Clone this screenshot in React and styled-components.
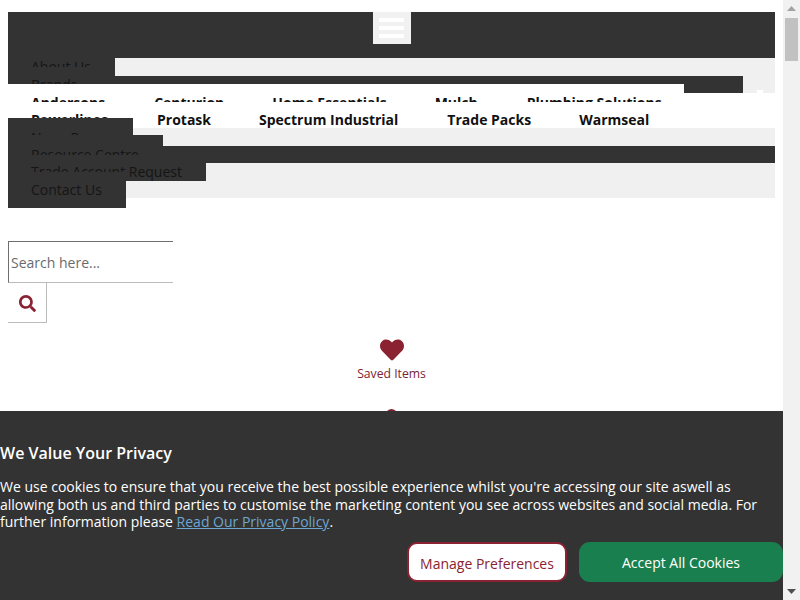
import React from "react";
import styled, { createGlobalStyle } from "styled-components";
import { FaSearch, FaHeart } from "react-icons/fa";

const Global = createGlobalStyle`
  html, body { overflow: hidden; }
  body {
    margin: 8px;
    margin-right: 25px;
    background: #fff;
    font-family: "Open Sans", "Liberation Sans", sans-serif;
    font-size: 14px;
    color: #151515;
  }
`;

const tones = { dark: "#333333", light: "#f0f0f0", white: "#ffffff" };

const Page = styled.div`
  padding-top: 4px;
`;

const Band = styled.div`
  display: flex;
  height: ${(p) => p.$h}px;
  overflow: hidden;
`;

const Cell = styled.div`
  flex: ${(p) => (p.$w ? `0 0 ${p.$w}px` : "1 1 0")};
  background: ${(p) => tones[p.$tone]};
  min-width: 0;
`;

const NubCell = styled(Cell)`
  display: flex;
  align-items: flex-end;
  padding-left: 14px;
`;

const Nub = styled.span`
  width: 6px;
  height: 3px;
  background: #fff;
`;

const TopBar = styled.div`
  display: flex;
  justify-content: center;
  height: 46px;
  background: #333333;
`;

const Burger = styled.button`
  display: flex;
  flex-direction: column;
  align-items: center;
  gap: 4px;
  width: 38px;
  height: 32px;
  padding: 6px 0 0;
  border: 0;
  background: #f1f1f1;
`;

const BurgerBar = styled.span`
  display: block;
  width: 25px;
  height: 4px;
  background: #fff;
`;

const MenuLabel = styled.div`
  box-sizing: border-box;
  height: ${(p) => p.$clip}px;
  overflow: hidden;
  padding: ${(p) => p.$offset || 0}px 0 0 23px;
  line-height: 18px;
  white-space: nowrap;
  color: #151515;
`;

const BrandTop = styled.div`
  display: flex;
  height: 18px;
  background: #fff;
`;

const BrandClip = styled.div`
  display: flex;
  height: 8px;
  margin-top: 1px;
  padding-left: 23px;
  overflow: hidden;
`;

const BrandRow = styled.div`
  display: flex;
  height: 17px;
  background: #fff;
`;

const BrandLink = styled.a`
  display: block;
  font-weight: 700;
  line-height: 18px;
  color: #111;
  white-space: nowrap;
  margin-right: ${(p) => p.$gap || 0}px;
`;

const BrandLead = styled.div`
  flex: 0 0 125px;
  display: flex;
  flex-direction: column;
`;

const BrandLeadText = styled.div`
  flex: 0 0 7px;
  overflow: hidden;
  padding-left: 23px;
  background: #fff;
`;

const BrandLeadCover = styled.div`
  flex: 1;
  background: #333333;
`;

const BrandRest = styled.div`
  display: flex;
  padding-left: 24px;
`;

const TradeBand = styled.div`
  display: flex;
  height: 18px;
`;

const ContactRow = styled.div`
  display: flex;
  margin-top: -9px;
  position: relative;
`;

const ContactCell = styled.div`
  flex: 0 0 118px;
  height: 36px;
  padding: 9px 0 0 23px;
  box-sizing: border-box;
  background: #333333;
  line-height: 18px;
  color: #151515;
`;

const ContactFill = styled.div`
  flex: 1;
  height: 17px;
  margin-top: 9px;
  background: #f0f0f0;
`;

const SearchForm = styled.form`
  display: flex;
  flex-direction: column;
  margin-top: 33px;
`;

const SearchInput = styled.input`
  box-sizing: border-box;
  width: 165px;
  height: 42px;
  padding: 0 2px;
  border-width: 1px 0 1px 1px;
  border-style: solid;
  border-color: #6f6f6f #bbb #bbb #6f6f6f;
  font: 14px "Open Sans", sans-serif;
  outline: none;
  &::placeholder { color: #6b6b6b; opacity: 1; }
`;

const SearchButton = styled.button`
  display: flex;
  align-items: center;
  justify-content: center;
  box-sizing: border-box;
  width: 39px;
  height: 40px;
  padding: 2px 0 0;
  background: #fff;
  border: 0;
  border-right: 1px solid #bbb;
  border-bottom: 1px solid #bbb;
  color: #8a2232;
  font-size: 17px;
`;

const Saved = styled.a`
  display: flex;
  flex-direction: column;
  align-items: center;
  margin-top: 15px;
  color: #8a2232;
  font-size: 24px;
  line-height: 0;
`;

const SavedText = styled.span`
  margin-top: 3px;
  font-size: 12.2px;
  line-height: 18px;
  color: #7b2334;
`;

const Dot = styled.div`
  width: 11px;
  height: 11px;
  margin: 26px auto 0;
  border-radius: 50%;
  background: #8a2232;
`;

const Banner = styled.section`
  position: fixed;
  left: 0;
  right: 17px;
  bottom: 0;
  height: 189px;
  box-sizing: border-box;
  padding-top: 32px;
  background: #333333;
  color: #fff;
`;

const BannerTitle = styled.h2`
  margin: 0 0 15px;
  font-size: 16px;
  font-weight: 600;
  line-height: 20px;
`;

const BannerText = styled.p`
  margin: 0;
  font-size: 14px;
  line-height: 17.5px;
`;

const PolicyLink = styled.a`
  color: #6ea6d2;
  text-decoration: underline;
`;

const BannerActions = styled.div`
  display: flex;
  justify-content: flex-end;
  gap: 12px;
  margin-top: 11px;
`;

const ManageButton = styled.button`
  box-sizing: border-box;
  width: 160px;
  height: 40px;
  padding: 3px 0 0;
  border: 2px solid #8a2232;
  border-radius: 10px;
  background: #fff;
  color: #8a2232;
  font: 14px "Open Sans", sans-serif;
`;

const AcceptButton = styled.button`
  width: 204px;
  height: 40px;
  padding: 2px 0 0;
  border: 0;
  border-radius: 11px;
  background: #1a7f4e;
  color: #fff;
  font: 500 14px "Open Sans", sans-serif;
`;

const Scrollbar = styled.div`
  position: fixed;
  top: 0;
  right: 0;
  bottom: 0;
  width: 17px;
  display: flex;
  flex-direction: column;
  align-items: center;
  background: #f1f1f1;
`;

const Thumb = styled.div`
  width: 13px;
  height: 43px;
  margin-top: 7px;
  background: #c1c1c1;
`;

const Arrow = styled.svg`
  display: block;
  flex: none;
  width: 9px;
  height: 5px;
  margin: ${(p) => p.$top || 0}px 0 ${(p) => p.$bottom || 0}px;
  fill: ${(p) => p.$fill};
`;

const Spacer = styled.div`
  flex: 1;
`;

export default function App() {
  return (
    <Page>
      <Global />
      <TopBar>
        <Burger aria-label="Menu">
          <BurgerBar />
          <BurgerBar />
          <BurgerBar />
        </Burger>
      </TopBar>

      <Band $h={18}>
        <Cell $w={107} $tone="dark">
          <MenuLabel $clip={9}>About Us</MenuLabel>
        </Cell>
        <Cell $tone="light" />
      </Band>
      <Band $h={8}>
        <Cell $w={735} $tone="dark">
          <MenuLabel $clip={8}>Brands</MenuLabel>
        </Cell>
        <Cell $tone="light" />
      </Band>
      <Band $h={9}>
        <Cell $w={676} $tone="white" />
        <Cell $w={59} $tone="dark" />
        <NubCell $tone="light">
          <Nub />
        </NubCell>
      </Band>

      <BrandTop>
        <BrandClip>
          <BrandLink $gap={49}>Andersons</BrandLink>
          <BrandLink $gap={48}>Centurion</BrandLink>
          <BrandLink $gap={48}>Home Essentials</BrandLink>
          <BrandLink $gap={49}>Mulch</BrandLink>
          <BrandLink>Plumbing Solutions</BrandLink>
        </BrandClip>
      </BrandTop>
      <BrandRow>
        <BrandLead>
          <BrandLeadText>
            <BrandLink>Powerlines</BrandLink>
          </BrandLeadText>
          <BrandLeadCover />
        </BrandLead>
        <BrandRest>
          <BrandLink $gap={48}>Protask</BrandLink>
          <BrandLink $gap={49}>Spectrum Industrial</BrandLink>
          <BrandLink $gap={48}>Trade Packs</BrandLink>
          <BrandLink>Warmseal</BrandLink>
        </BrandRest>
      </BrandRow>

      <Band $h={7}>
        <Cell $w={125} $tone="dark">
          <MenuLabel $clip={7} $offset={1}>News Room</MenuLabel>
        </Cell>
        <Cell $tone="light" />
      </Band>
      <Band $h={11}>
        <Cell $w={155} $tone="dark" />
        <Cell $tone="light" />
      </Band>
      <Band $h={17}>
        <Cell $tone="dark">
          <MenuLabel $clip={9}>Resource Centre</MenuLabel>
        </Cell>
      </Band>
      <TradeBand>
        <Cell $w={198} $tone="dark">
          <MenuLabel $clip={18}>Trade Account Request</MenuLabel>
        </Cell>
        <Cell $tone="light" />
      </TradeBand>
      <ContactRow>
        <ContactCell>Contact Us</ContactCell>
        <ContactFill />
      </ContactRow>

      <SearchForm>
        <SearchInput placeholder="Search here..." />
        <SearchButton type="button" aria-label="Search">
          <FaSearch />
        </SearchButton>
      </SearchForm>

      <Saved>
        <FaHeart />
        <SavedText>Saved Items</SavedText>
      </Saved>
      <Dot />

      <Banner>
        <BannerTitle>We Value Your Privacy</BannerTitle>
        <BannerText>
          We use cookies to ensure that you receive the best possible experience whilst you're accessing our site aswell as
          allowing both us and third parties to customise the marketing content you see across websites and social media. For
          further information please <PolicyLink>Read Our Privacy Policy</PolicyLink>.
        </BannerText>
        <BannerActions>
          <ManageButton>Manage Preferences</ManageButton>
          <AcceptButton>Accept All Cookies</AcceptButton>
        </BannerActions>
      </Banner>

      <Scrollbar>
        <Arrow $top={6} $fill="#a3a3a3" viewBox="0 0 9 5"><path d="M4.5 0L9 5H0z" /></Arrow>
        <Thumb />
        <Spacer />
        <Arrow $bottom={6} $fill="#505050" viewBox="0 0 9 5"><path d="M0 0h9L4.5 5z" /></Arrow>
      </Scrollbar>
    </Page>
  );
}
